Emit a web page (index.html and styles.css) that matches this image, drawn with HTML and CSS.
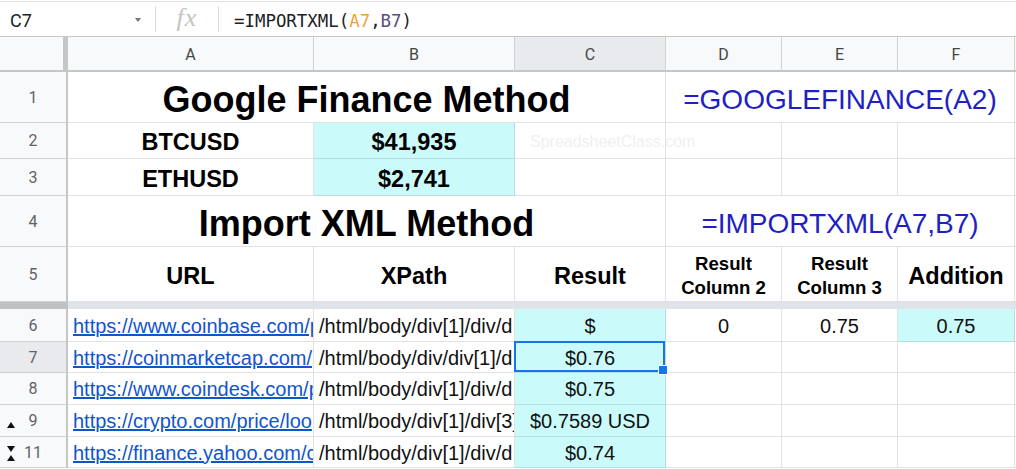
FILE: index.html
```html
<!DOCTYPE html>
<html>
<head>
<meta charset="utf-8">
<link rel="stylesheet" href="styles.css">
</head>
<body>
<div class="fbar">
  <div class="namebox"><span class="ref">C7</span><span class="caret"></span></div>
  <div class="fxbox"><span class="fx">fx</span></div>
  <div class="formula">=IMPORTXML(<span class="r1">A7</span>,<span class="r2">B7</span>)</div>
</div>
<div class="sheet">
  <div class="corner"></div>
  <div class="ch">A</div><div class="ch">B</div><div class="ch sel-col">C</div><div class="ch">D</div><div class="ch">E</div><div class="ch">F</div><div class="ch last"></div>

  <div class="rh">1</div>
  <div class="c span3 title">Google Finance Method</div>
  <div class="c span3 bluef">=GOOGLEFINANCE(A2)</div>
  <div class="c blank"></div>

  <div class="rh">2</div>
  <div class="c mid">BTCUSD</div>
  <div class="c mid cyan">$41,935</div>
  <div class="c wm-cell"><span class="wm">SpreadsheetClass.com</span></div>
  <div class="c"></div><div class="c"></div><div class="c"></div><div class="c blank"></div>

  <div class="rh">3</div>
  <div class="c mid">ETHUSD</div>
  <div class="c mid cyan">$2,741</div>
  <div class="c"></div><div class="c"></div><div class="c"></div><div class="c"></div><div class="c blank"></div>

  <div class="rh">4</div>
  <div class="c span3 title t4">Import XML Method</div>
  <div class="c span3 bluef">=IMPORTXML(A7,B7)</div>
  <div class="c blank"></div>

  <div class="rh">5</div>
  <div class="c mid">URL</div>
  <div class="c mid">XPath</div>
  <div class="c mid">Result</div>
  <div class="c two">Result<br>Column 2</div>
  <div class="c two">Result<br>Column 3</div>
  <div class="c mid">Addition</div>
  <div class="c blank"></div>

  <div class="rh freeze"></div>
  <div class="freeze-cells"></div>

  <div class="rh">6</div>
  <div class="c txt"><a class="link">https://www.coinbase.com/p</a></div>
  <div class="c txt">/html/body/div[1]/div/d</div>
  <div class="c num cyan">$</div>
  <div class="c num">0</div>
  <div class="c num">0.75</div>
  <div class="c num cyan">0.75</div>
  <div class="c blank"></div>

  <div class="rh sel-row">7</div>
  <div class="c txt"><a class="link">https://coinmarketcap.com/</a></div>
  <div class="c txt">/html/body/div/div[1]/d</div>
  <div class="c num cyan active">$0.76<span class="selbox"><span class="handle"></span></span></div>
  <div class="c"></div><div class="c"></div><div class="c"></div><div class="c blank"></div>

  <div class="rh">8</div>
  <div class="c txt"><a class="link">https://www.coindesk.com/p</a></div>
  <div class="c txt">/html/body/div[1]/div/d</div>
  <div class="c num cyan">$0.75</div>
  <div class="c"></div><div class="c"></div><div class="c"></div><div class="c blank"></div>

  <div class="rh"><svg class="ico i9" width="8" height="6" viewBox="0 0 8 6"><path d="M0 6L4 0L8 6Z"/></svg>9</div>
  <div class="c txt"><a class="link">https://crypto.com/price/loo</a></div>
  <div class="c txt">/html/body/div[1]/div[3]</div>
  <div class="c num cyan">$0.7589 USD</div>
  <div class="c"></div><div class="c"></div><div class="c"></div><div class="c blank"></div>

  <div class="rh"><svg class="ico i11" width="8" height="15" viewBox="0 0 8 15"><path d="M0 0H8L4 6Z M4 9L8 15H0Z"/></svg>11</div>
  <div class="c txt"><a class="link">https://finance.yahoo.com/c</a></div>
  <div class="c txt">/html/body/div[1]/div/d</div>
  <div class="c num cyan">$0.74</div>
  <div class="c"></div><div class="c"></div><div class="c"></div><div class="c blank"></div>
</div>
</body>
</html>
```
FILE: styles.css
```css
html, body {
  margin: 0;
  padding: 0;
  background: #fff;
}
body {
  width: 1016px;
  height: 469px;
  overflow: hidden;
  font-family: "Liberation Sans", Arial, sans-serif;
}
.fbar {
  margin-top: 1px;
  height: 36px;
  box-sizing: border-box;
  border-top: 1px solid #e1e1e1;
  border-bottom: 1px solid #c7c7c7;
  display: flex;
  align-items: center;
}
.namebox {
  width: 155px;
  height: 100%;
  box-sizing: border-box;
  display: flex;
  align-items: center;
  padding: 2px 0 0 10px;
}
.ref {
  font-family: Roboto, "Liberation Sans", sans-serif;
  font-size: 18px;
  color: #202124;
  flex: 1;
}
.caret {
  width: 0;
  height: 0;
  border-left: 3px solid transparent;
  border-right: 3px solid transparent;
  border-top: 4px solid #777;
  margin-right: 14px;
}
.fxbox {
  width: 62px;
  height: 26px;
  border-left: 1px solid #dadce0;
  border-right: 1px solid #dadce0;
  display: flex;
  align-items: center;
  justify-content: center;
}
.fx {
  font-family: "Liberation Serif", serif;
  font-style: italic;
  font-size: 26px;
  color: #c4c4c4;
  letter-spacing: 1px;
  margin-top: -2px;
}
.formula {
  padding: 3px 0 0 15px;
  font-family: "DejaVu Sans Mono", "Liberation Mono", monospace;
  font-size: 17.4px;
  color: #202124;
}
.r1 { color: #eea23c; }
.r2 { color: #5b4c84; }

.sheet {
  display: grid;
  grid-template-columns: 68px 246px 201px 151px 116px 116px 117px 1fr;
  grid-template-rows: 35px 51px 36px 37px 51px 55px 7px 33px 31px 32px 32px 31px;
}
.corner {
  background: #f8f9fa;
  border-right: 5px solid #c4c7c5;
  border-bottom: 2px solid #c4c7c5;
  box-sizing: border-box;
}
.ch {
  background: #f8f9fa;
  border-right: 1px solid #cfd1d3;
  border-bottom: 2px solid #c4c7c5;
  box-sizing: border-box;
  display: flex;
  align-items: center;
  justify-content: center;
  font-family: Roboto, "Liberation Sans", sans-serif;
  font-size: 16px;
  color: #444746;
  padding-top: 2px;
}
.ch.sel-col { background: #e8eaed; }
.ch.last { border-right: none; }
.rh {
  position: relative;
  background: #f8f9fa;
  border-right: 2px solid #c4c7c5;
  border-bottom: 1px solid #cfd1d3;
  box-sizing: border-box;
  display: flex;
  align-items: center;
  justify-content: center;
  font-family: Roboto, "Liberation Sans", sans-serif;
  font-size: 16px;
  color: #5f6368;
}
.rh.sel-row { background: #e8eaed; }
.rh.freeze {
  background: #bfc1c3;
  border: none;
}
.freeze-cells {
  grid-column: 2 / -1;
  background: #e0e3e7;
}
.ico {
  position: absolute;
  left: 7px;
  fill: #111;
}
.i9 { top: 17px; }
.i11 { top: 9px; }

.c {
  border-right: 1px solid rgba(0, 0, 0, 0.115);
  border-bottom: 1px solid rgba(0, 0, 0, 0.115);
  box-sizing: border-box;
  color: #000;
  font-size: 20px;
  min-width: 0;
}
.c.blank { border-right: none; }
.span3 { grid-column: span 3; }
.title {
  display: flex;
  align-items: center;
  justify-content: center;
  font-weight: bold;
  font-size: 36px;
  padding-top: 6px;
}
.title.t4 { padding-top: 5px; }
.bluef {
  display: flex;
  align-items: center;
  justify-content: center;
  font-size: 28px;
  color: #1f1fc4;
  padding-top: 6px;
}
.mid {
  display: flex;
  align-items: center;
  justify-content: center;
  font-weight: bold;
  font-size: 23.5px;
  padding-top: 4px;
}
.two {
  display: flex;
  align-items: center;
  justify-content: center;
  text-align: center;
  font-weight: bold;
  font-size: 18.6px;
  line-height: 24px;
  padding-top: 3px;
}
.cyan { background: #cbfafa; }
.txt {
  white-space: nowrap;
  overflow: hidden;
  padding: 2px 0 0 5px;
  display: flex;
  align-items: center;
  color: #111;
}
.link {
  color: #1155cc;
  text-decoration: underline;
}
.num {
  display: flex;
  align-items: center;
  justify-content: center;
  color: #111;
  padding-top: 2px;
}
.wm-cell {
  position: relative;
  overflow: visible;
  z-index: 1;
}
.wm {
  position: absolute;
  left: 15px;
  top: 10px;
  font-size: 16px;
  color: #f0f0f0;
  white-space: nowrap;
}
.active { position: relative; }
.selbox {
  position: absolute;
  left: -1px;
  top: -1px;
  right: 0;
  bottom: 0;
  border: 2px solid #1a73e8;
  box-sizing: border-box;
}
.handle {
  position: absolute;
  right: -5px;
  bottom: -5px;
  width: 8px;
  height: 8px;
  background: #1a73e8;
  border: 1px solid #fff;
  box-sizing: content-box;
}
```
